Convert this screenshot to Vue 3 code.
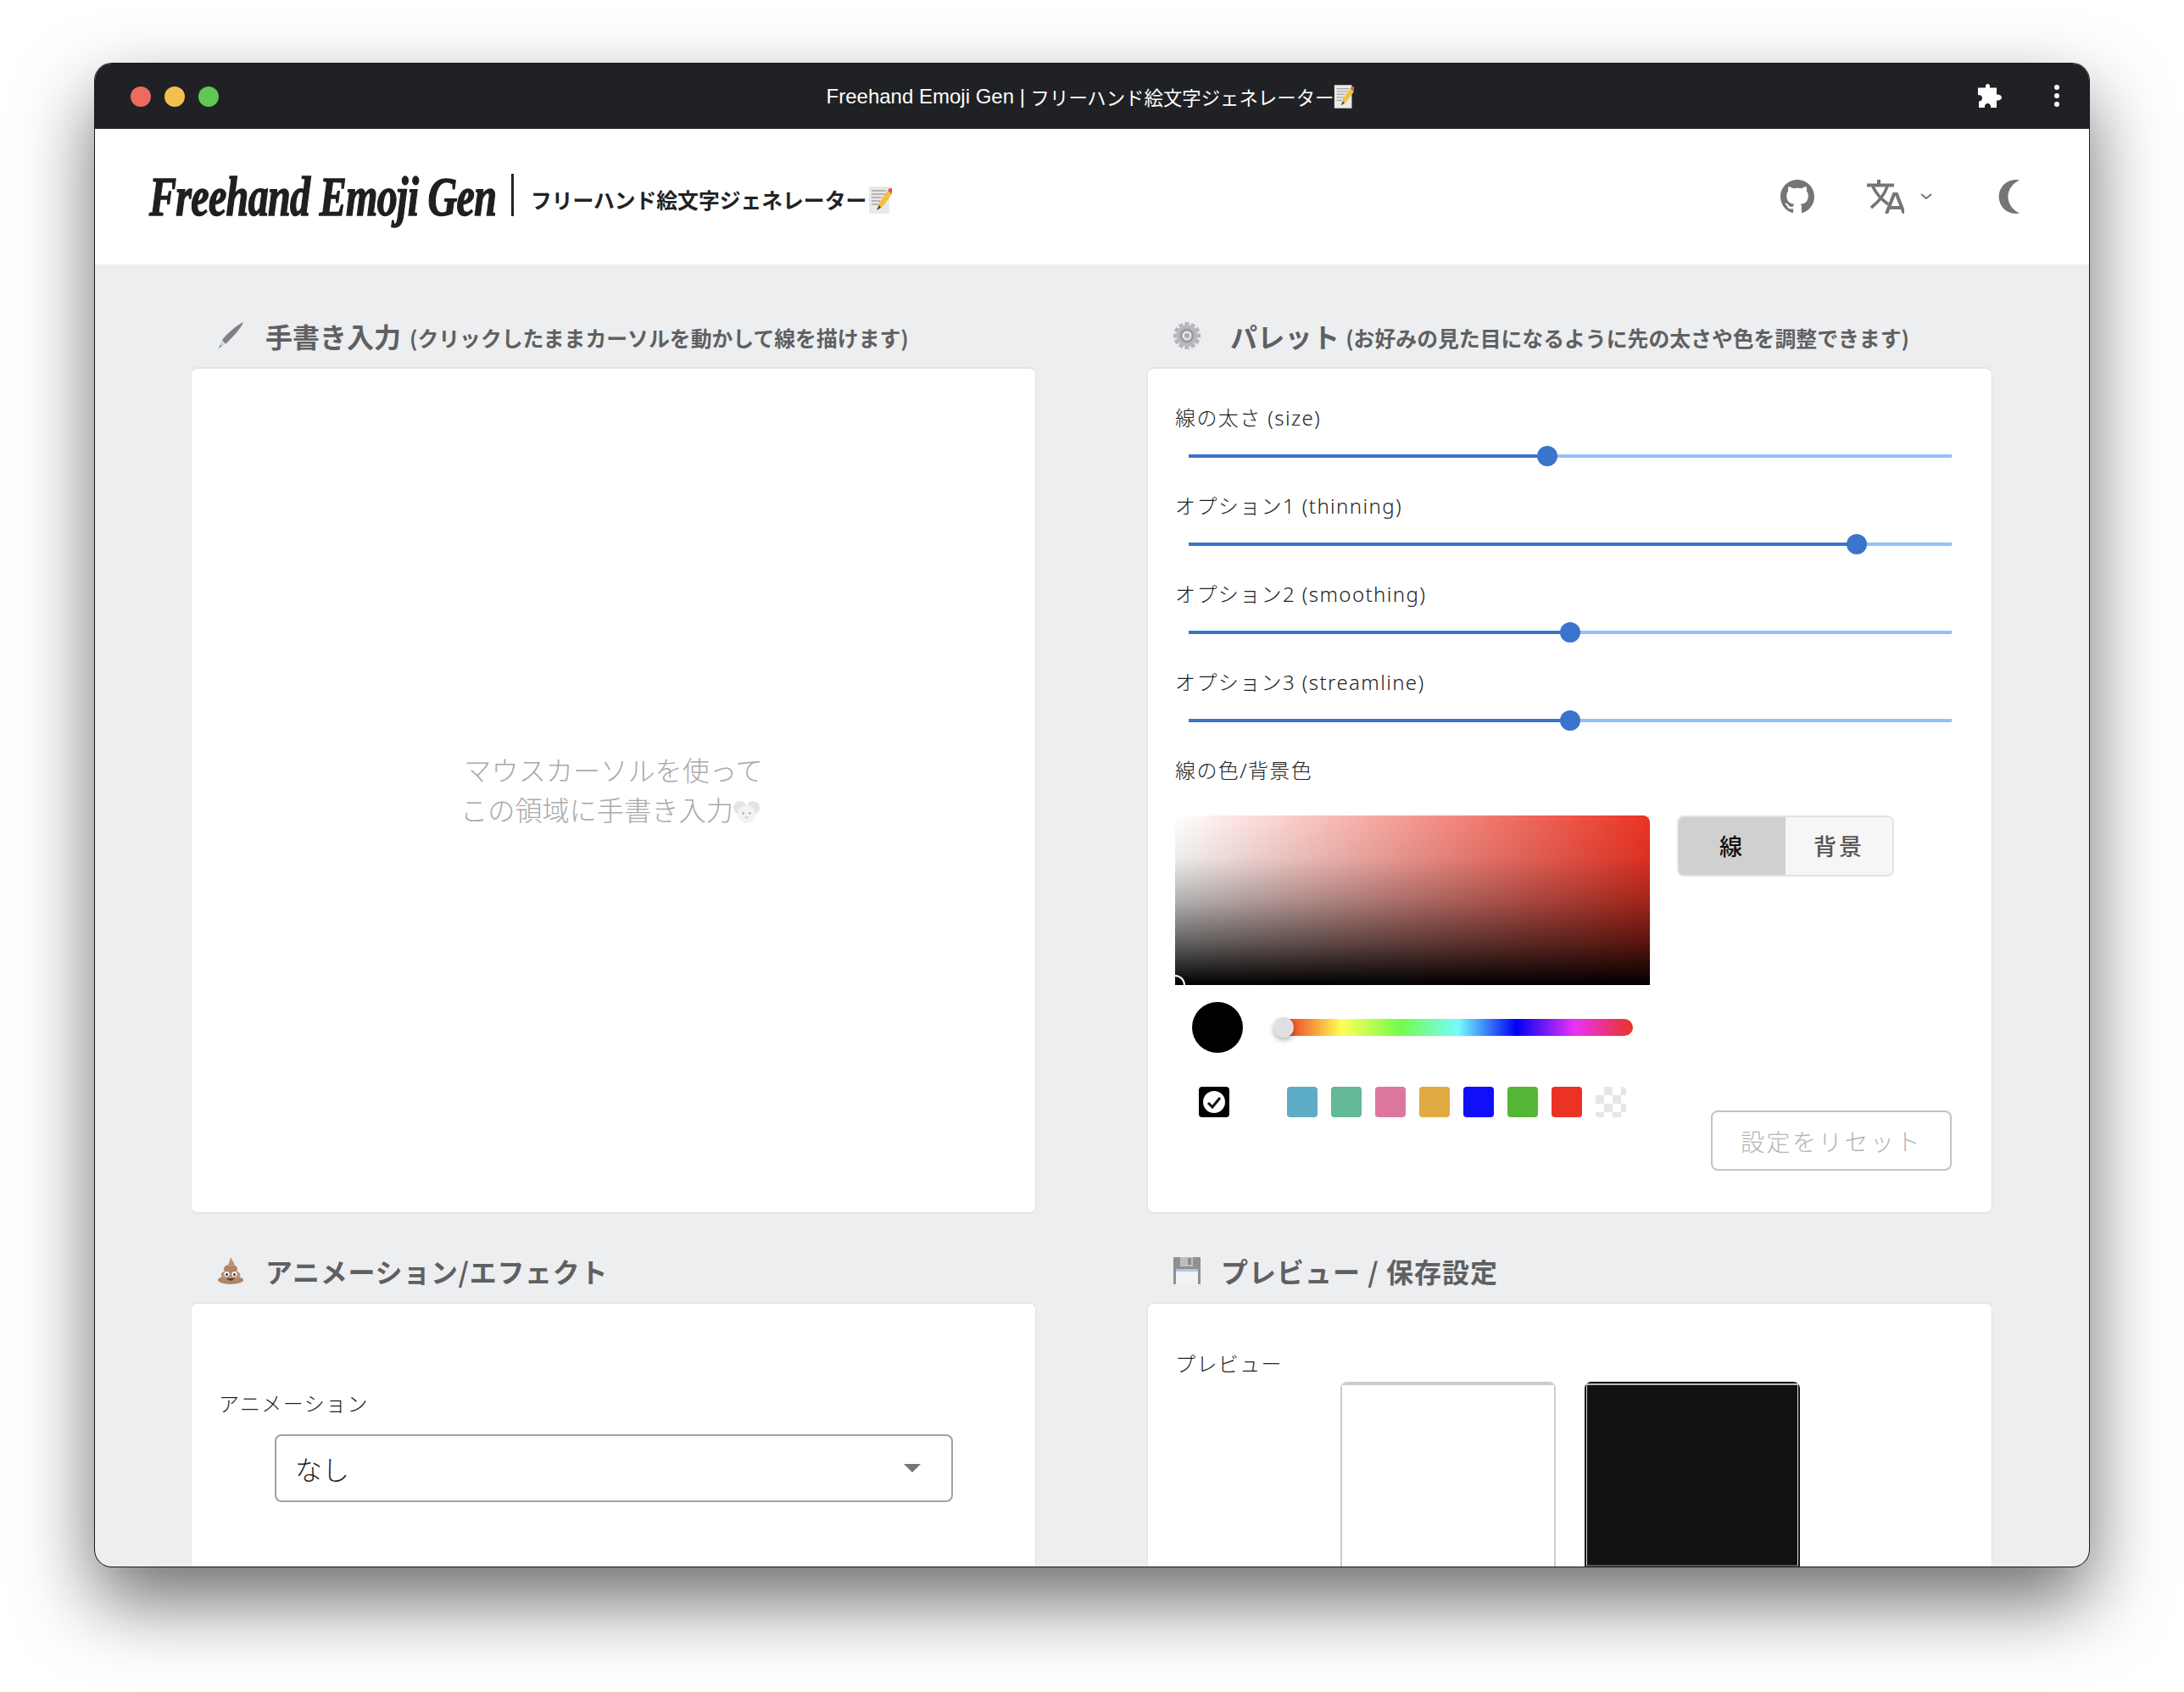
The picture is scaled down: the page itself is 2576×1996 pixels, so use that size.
<template>
  <div class="desktop">
    <div class="window">
      <div class="titlebar">
        <div class="lights">
          <span class="light red"></span>
          <span class="light yellow"></span>
          <span class="light green"></span>
        </div>
        <div class="title">
          <span>Freehand Emoji Gen |&nbsp;</span><span class="title-jp">フリーハンド絵文字ジェネレーター</span>
          <svg class="memo-small" viewBox="0 0 28 32">
            <rect x="1" y="0" width="24" height="32" fill="#e9e9e9" />
            <path d="M4 5h17M4 9h17M4 13h12M4 17h10M4 21h8" stroke="#a5a5a5" stroke-width="1.4" />
            <path d="M10 28 L13 19 L23 5 L28 9 L17 24 Z" fill="#f3c13c" />
            <path d="M23 5 L25 2 L28 2 L28 9 Z" fill="#e2574c" />
            <path d="M10 28 L13 22 L15 25 Z" fill="#444" />
          </svg>
        </div>
        <div class="chrome-icons">
          <svg class="puzzle" viewBox="0 0 28 28">
            <path d="M7.500 4.500H9C8.500 2 9.500 0 11.500 0S14.500 2 14 4.500H22V12.500C25 12 28 13.500 28 16S25 20 22 19.500V28H15C15.500 25.500 14 23 11.500 23S7.500 25.500 8 28H1V20.500C3.500 20.500 5 19 5 16.500S3 13 0 13V4.500Z" fill="#fff" />
          </svg>
          <div class="dots"><i></i><i></i><i></i></div>
        </div>
      </div>

      <header class="app-header">
        <div class="brand">
          <span class="logo">Freehand Emoji Gen</span>
          <span class="divider"></span>
          <span class="subtitle">フリーハンド絵文字ジェネレーター</span>
          <svg class="memo" viewBox="0 0 28 32">
            <rect x="1" y="0" width="24" height="32" fill="#e9e9e9" />
            <path d="M4 5h17M4 9h17M4 13h12M4 17h10M4 21h8" stroke="#a5a5a5" stroke-width="1.4" />
            <path d="M10 28 L13 19 L23 5 L28 9 L17 24 Z" fill="#f3c13c" />
            <path d="M23 5 L25 2 L28 2 L28 9 Z" fill="#e2574c" />
            <path d="M10 28 L13 22 L15 25 Z" fill="#444" />
          </svg>
        </div>
        <div class="header-actions">
          <svg class="gh" viewBox="0 0 16 16">
            <path fill-rule="evenodd" d="M8 0C3.580 0 0 3.580 0 8c0 3.540 2.290 6.530 5.470 7.590.4.070.55-.17.55-.38 0-.19-.01-.82-.01-1.490-2.010.37-2.530-.49-2.690-.94-.09-.23-.48-.94-.82-1.130-.28-.15-.68-.52-.01-.53.63-.01 1.080.58 1.230.82.720 1.210 1.870.87 2.330.66.070-.52.280-.87.510-1.070-1.780-.2-3.640-.89-3.640-3.950 0-.87.310-1.590.820-2.150-.08-.2-.36-1.020.08-2.120 0 0 .67-.21 2.200.82.640-.18 1.320-.27 2-.27s1.360.09 2 .27c1.530-1.040 2.200-.82 2.200-.82.440 1.100.16 1.920.08 2.120.51.560.82 1.270.82 2.150 0 3.070-1.870 3.750-3.650 3.950.29.250.54.730.54 1.480 0 1.070-.01 1.930-.01 2.200 0 .21.150.46.550.38A8.010 8.010 0 0 0 16 8c0-4.420-3.580-8-8-8z" fill="#757575" />
          </svg>
          <svg class="lang" viewBox="0 0 44 40">
            <path d="M0 6.500h32" stroke="#757575" stroke-width="4" fill="none" />
            <path d="M14 0v6" stroke="#757575" stroke-width="4" fill="none" />
            <path d="M7 8c4 9 10 15 18 21M24 8c-3 9-9 17-19 25" stroke="#757575" stroke-width="3.600" fill="none" />
            <path d="M23 40 L32 17 H35 L44 40 M26 33 H41" stroke="#757575" stroke-width="4" fill="none" />
          </svg>
          <svg class="chev" viewBox="0 0 14 8">
            <path d="M1 1l6 5 6-5" stroke="#757575" stroke-width="2" fill="none" />
          </svg>
          <svg class="moon" viewBox="0 0 26 40">
            <path d="M26 0.500A20 20 0 1 0 26 39.500C17 35 12.500 28 12.500 20S17 5 26 0.500Z" fill="#757575" />
          </svg>
        </div>
      </header>

      <main class="board">
        <section class="panel">
          <h2 class="panel-title">
            <svg class="emoji" viewBox="0 0 32 32">
              <path d="M31 0C24 3 12 13 6 21l4 5C17 19 28 8 31 0z" fill="#7f8083" />
              <path d="M6 21l4 5-4 2-2-2z" fill="#d2d5d8" />
              <path d="M4 26l2 2-5 4z" fill="#7fa3b6" />
            </svg>
            <span class="title-main">手書き入力</span>
            <small>(クリックしたままカーソルを動かして線を描けます)</small>
          </h2>
          <div class="card draw-card">
            <p class="placeholder">
              マウスカーソルを使って<br />
              この領域に手書き入力<svg class="mouse" viewBox="0 0 32 30">
                <circle cx="8" cy="9" r="8" fill="#e4e4e4" />
                <circle cx="24" cy="9" r="8" fill="#e4e4e4" />
                <ellipse cx="16" cy="17" rx="11" ry="11" fill="#f3f3f3" />
                <circle cx="12" cy="16" r="1.200" fill="#999" />
                <circle cx="20" cy="16" r="1.200" fill="#999" />
                <ellipse cx="16" cy="21" rx="2" ry="1.500" fill="#f2c5bb" />
              </svg>
            </p>
          </div>
        </section>

        <section class="panel">
          <h2 class="panel-title">
            <svg class="emoji" viewBox="0 0 32 32">
              <g fill="#b4b6b9">
                <rect v-for="a in gearTeeth" :key="a" x="13.500" y="0" width="5" height="7" :transform="`rotate(${a} 16 16)`" />
              </g>
              <circle cx="16" cy="16" r="12.500" fill="#b7b9bc" />
              <circle cx="16" cy="16" r="8.500" fill="#9a9c9f" />
              <circle cx="16" cy="16" r="5.500" fill="#e8e8e8" />
              <circle cx="16" cy="16" r="3" fill="#a9abad" />
            </svg>
            <span class="title-main title-wide">パレット</span>
            <small>(お好みの見た目になるように先の太さや色を調整できます)</small>
          </h2>
          <div class="card palette-card">
            <div v-for="s in sliders" :key="s.label" class="slider-group">
              <div class="field-label">{{ s.label }}</div>
              <div class="slider">
                <div class="slider-track">
                  <div class="slider-fill" :style="{ width: s.value + '%' }"></div>
                  <div class="slider-handle" :style="{ left: s.value + '%' }"></div>
                </div>
              </div>
            </div>
            <div class="field-label">線の色/背景色</div>
            <div class="color-area">
              <div class="picker">
                <div class="saturation">
                  <span class="sat-pointer"></span>
                </div>
                <div class="hue-row">
                  <div class="current-color"></div>
                  <div class="hue-track"><span class="hue-thumb"></span></div>
                </div>
                <div class="swatches">
                  <div class="swatch swatch-black">
                    <svg viewBox="0 0 26 26" class="tick">
                      <circle cx="13" cy="13" r="13" fill="#fff" />
                      <path d="M6 14l5 5 9-11" stroke="#111" stroke-width="3" fill="none" />
                    </svg>
                  </div>
                  <div class="swatch-list">
                    <div v-for="c in swatchColors" :key="c" class="swatch" :style="{ background: c }"></div>
                    <div class="swatch swatch-clear"></div>
                  </div>
                </div>
              </div>
              <div class="color-side">
                <div class="toggle">
                  <div class="toggle-item active">線</div>
                  <div class="toggle-item">背景</div>
                </div>
                <div class="reset">設定をリセット</div>
              </div>
            </div>
          </div>
        </section>

        <section class="panel">
          <h2 class="panel-title">
            <svg class="emoji" viewBox="0 0 32 32">
              <ellipse cx="16" cy="27" rx="15" ry="5" fill="#b08468" />
              <ellipse cx="16" cy="21" rx="11.500" ry="6" fill="#bd9277" />
              <ellipse cx="16" cy="14" rx="8" ry="5.500" fill="#b08468" />
              <path d="M12 11C14 8 15 4 16 0c2 4 5 7 5 11z" fill="#bd9277" />
              <circle cx="11.500" cy="20" r="3" fill="#fff" />
              <circle cx="20.500" cy="20" r="3" fill="#fff" />
              <circle cx="11.500" cy="20.500" r="1.500" fill="#333" />
              <circle cx="20.500" cy="20.500" r="1.500" fill="#333" />
              <path d="M11 25c3 3.500 7 3.500 10 0z" fill="#5b3a2a" />
            </svg>
            <span class="title-main title-anim">アニメーション/エフェクト</span>
          </h2>
          <div class="card anim-card">
            <div class="field-label">アニメーション</div>
            <div class="select">
              <span>なし</span>
              <i class="select-arrow"></i>
            </div>
          </div>
        </section>

        <section class="panel">
          <h2 class="panel-title">
            <svg class="emoji" viewBox="0 0 32 32">
              <rect x="0" y="0" width="32" height="32" rx="1" fill="#8f9092" />
              <rect x="8" y="0" width="15" height="11" fill="#bdbec0" />
              <rect x="17" y="1" width="4" height="8" fill="#8f9092" />
              <rect x="3" y="14" width="26" height="3" fill="#a7cbe8" />
              <rect x="3" y="17" width="26" height="15" fill="#f1f2f3" />
            </svg>
            <span class="title-main title-tight">プレビュー / 保存設定</span>
          </h2>
          <div class="card preview-card">
            <div class="field-label">プレビュー</div>
            <div class="previews">
              <div class="preview preview-light"><div class="preview-inner"></div></div>
              <div class="preview preview-dark"><div class="preview-inner"></div></div>
            </div>
          </div>
        </section>
      </main>
    </div>
  </div>
</template>

<script setup>
const sliders = [
  { label: '線の太さ (size)', value: 47 },
  { label: 'オプション1 (thinning)', value: 87.6 },
  { label: 'オプション2 (smoothing)', value: 50 },
  { label: 'オプション3 (streamline)', value: 50 },
];

const swatchColors = ['#5eadc6', '#62b897', '#dd769f', '#e0aa42', '#1010f8', '#55b636', '#ea3323'];

const gearTeeth = [0, 30, 60, 90, 120, 150, 180, 210, 240, 270, 300, 330];
</script>

<style>
html,
body {
  margin: 0;
  background: #fff;
  overflow: hidden;
}
</style>

<style scoped>
.desktop {
  width: 2576px;
  height: 1996px;
  box-sizing: border-box;
  padding: 75px 112px 148px;
  background: #fff;
  font-family: "Noto Sans CJK JP", "Noto Sans", sans-serif;
  color: #222;
}

.window {
  height: 1773px;
  border-radius: 20px;
  overflow: hidden;
  background: #edeef0;
  box-shadow: 0 0 0 1px #1a1a1a, 0 40px 90px rgba(0, 0, 0, 0.58);
}

.titlebar {
  height: 77px;
  box-sizing: border-box;
  position: relative;
  display: flex;
  align-items: center;
  justify-content: center;
  background: #202124;
  color: #fff;
  font-family: "Liberation Sans", "Noto Sans CJK JP", sans-serif;
  font-size: 24px;
}

.lights {
  position: absolute;
  left: 42px;
  top: 27px;
  display: flex;
  gap: 16px;
}

.light {
  width: 24px;
  height: 24px;
  border-radius: 50%;
}

.red { background: #ed6a5e; }
.yellow { background: #f5bf4f; }
.green { background: #62c554; }

.title {
  display: flex;
  align-items: center;
  margin-right: 4px;
}

.title-jp {
  font-family: "Noto Sans CJK JP", sans-serif;
  font-size: 22.400px;
}

.memo-small {
  width: 24px;
  height: 28px;
}

.chrome-icons {
  position: absolute;
  right: 35px;
  top: 0;
  height: 76px;
  display: flex;
  align-items: center;
  gap: 62px;
}

.puzzle {
  width: 28px;
  height: 28px;
}

.dots {
  display: flex;
  flex-direction: column;
  gap: 4px;
}

.dots i {
  width: 6px;
  height: 6px;
  border-radius: 50%;
  background: #fff;
}

.app-header {
  height: 160px;
  background: #fff;
  display: flex;
  align-items: center;
  justify-content: space-between;
  padding: 0 82px 0 64px;
}

.brand {
  display: flex;
  align-items: center;
}

.logo {
  width: 408px;
  white-space: nowrap;
  transform: scaleX(0.729);
  transform-origin: left center;
  font-family: "Liberation Serif", serif;
  font-style: italic;
  font-weight: 700;
  font-size: 66px;
  letter-spacing: -1px;
  color: #1f1f1f;
  -webkit-text-stroke: 1.500px #1f1f1f;
  line-height: 1;
}

.divider {
  width: 3px;
  height: 50px;
  margin: 0 20px 5px 19px;
  background: #222;
}

.subtitle {
  font-size: 24.800px;
  font-weight: 700;
  margin-top: 6px;
  color: #222;
}

.memo {
  width: 32px;
  height: 32px;
  margin-top: 8px;
}

.header-actions {
  display: flex;
  align-items: center;
}

.gh {
  width: 40px;
  height: 40px;
  margin-right: 62px;
}

.lang {
  width: 44px;
  height: 40px;
  margin-right: 19px;
}

.chev {
  width: 14px;
  height: 8px;
  margin-right: 77px;
}

.moon {
  width: 26px;
  height: 40px;
}

.board {
  display: grid;
  grid-template-columns: 997px 997px;
  column-gap: 131px;
  row-gap: 48px;
  padding: 65px 0 0 113px;
}

.panel-title {
  height: 40px;
  box-sizing: border-box;
  margin: 0 0 16px;
  padding: 0 0 2px 31px;
  display: flex;
  align-items: center;
  color: #5f6062;
  font-size: 32px;
  font-weight: 700;
  white-space: nowrap;
}

.panel-title small {
  font-size: 24.850px;
  font-weight: 700;
  margin-left: 10px;
  padding-top: 4px;
}

.emoji {
  width: 32px;
  height: 32px;
  flex: none;
  margin-right: 25px;
}

.title-wide {
  letter-spacing: 0.300px;
  margin-left: 10px;
}

.title-wide + small {
  margin-left: 7px;
}

.title-anim {
  letter-spacing: 0.700px;
}

.title-tight {
  letter-spacing: 1px;
  margin-left: -1px;
}

.card {
  background: #fff;
  border: 1px solid #e3e4e6;
  border-width: 2px 1px;
  border-radius: 8px;
  box-sizing: border-box;
}

.draw-card {
  height: 999px;
  display: flex;
  align-items: center;
  justify-content: center;
}

.placeholder {
  margin: 0 0 3px;
  font-size: 32.200px;
  line-height: 47px;
  text-align: center;
  color: #aaa;
  font-weight: 300;
}

.mouse {
  width: 31px;
  height: 29px;
  margin-right: 8px;
  vertical-align: -5px;
}

.palette-card {
  height: 999px;
  padding: 38px 32px 0;
}

.field-label {
  height: 40px;
  line-height: 40px;
  font-family: "Noto Sans", "Noto Sans CJK JP", sans-serif;
  font-size: 24px;
  letter-spacing: 1.400px;
  color: #222;
  font-weight: 300;
}

.slider-group {
  margin-bottom: 16px;
}

.slider {
  height: 48px;
  box-sizing: border-box;
  padding-top: 2px;
  display: flex;
  align-items: center;
  margin: 0 15px 0 16px;
}

.slider-track {
  position: relative;
  width: 100%;
  height: 4px;
  background: #93c0fb;
}

.slider-fill {
  height: 100%;
  background: #3a74cc;
}

.slider-handle {
  position: absolute;
  top: -10px;
  width: 24px;
  height: 24px;
  margin-left: -12px;
  border-radius: 50%;
  background: #3a74cc;
}

.color-area {
  display: flex;
  margin-top: 33px;
  gap: 33px;
}

.picker {
  width: 560px;
  flex: none;
}

.saturation {
  position: relative;
  height: 200px;
  border-radius: 8px 8px 0 0;
  overflow: hidden;
  background:
    linear-gradient(
      to top,
      #000 0%,
      rgba(0, 0, 0, 0.62) 25%,
      rgba(0, 0, 0, 0.3) 50%,
      rgba(0, 0, 0, 0.07) 75%,
      rgba(0, 0, 0, 0) 100%
    ),
    linear-gradient(to right, #fff, #ea3323);
}

.sat-pointer {
  position: absolute;
  left: -12px;
  bottom: -12px;
  width: 20px;
  height: 20px;
  border: 2px solid #fff;
  border-radius: 50%;
}

.hue-row {
  display: flex;
  align-items: center;
  height: 60px;
  margin-top: 20px;
  padding-left: 20px;
}

.current-color {
  width: 60px;
  height: 60px;
  border-radius: 50%;
  background: #000;
}

.hue-track {
  position: relative;
  width: 412px;
  height: 20px;
  margin-left: 48px;
  border-radius: 0 10px 10px 0;
  background: linear-gradient(
    to right,
    #ea3323 0%,
    #ffff55 16.600%,
    #75fb4c 33.300%,
    #75fbfd 50%,
    #0000f5 66.600%,
    #ea33f7 83.300%,
    #ea3323 100%
  );
}

.hue-thumb {
  position: absolute;
  left: -12px;
  top: -2px;
  width: 24px;
  height: 24px;
  border-radius: 50%;
  background: #e0e0e0;
  box-shadow: 0 3px 6px rgba(0, 0, 0, 0.3);
}

.swatches {
  display: flex;
  margin-top: 40px;
  padding-left: 28px;
}

.swatch {
  width: 36px;
  height: 36px;
  border-radius: 4px;
}

.swatch-black {
  display: flex;
  align-items: center;
  justify-content: center;
  background: #000;
}

.tick {
  width: 26px;
  height: 26px;
}

.swatch-list {
  display: flex;
  gap: 16px;
  margin-left: 68px;
}

.swatch-clear {
  background-color: #fff;
  background-image: repeating-conic-gradient(#e6e6e6 0 25%, #fff 0 50%);
  background-size: 20px 20px;
}

.color-side {
  flex: 1;
  height: 419px;
  margin-left: -1px;
  display: flex;
  flex-direction: column;
  justify-content: space-between;
  align-items: flex-start;
}

.toggle {
  display: flex;
  width: 256px;
  height: 72px;
  box-sizing: border-box;
  border: 2px solid #e3e3e3;
  border-radius: 8px;
  overflow: hidden;
  font-size: 27px;
  font-weight: 500;
  background: #f6f6f6;
}

.toggle-item {
  flex: 1;
  display: flex;
  align-items: center;
  justify-content: center;
  padding-bottom: 2px;
  color: #555;
  letter-spacing: 3px;
}

.toggle-item.active {
  background: #d0d0d0;
  color: #111;
}

.reset {
  align-self: flex-end;
  width: 284px;
  height: 71px;
  margin-right: 15px;
  box-sizing: border-box;
  border: 2px solid #c4c4c4;
  border-radius: 8px;
  display: flex;
  align-items: center;
  justify-content: center;
  font-size: 28px;
  letter-spacing: 2.600px;
  color: #b4b4b4;
  font-weight: 300;
}

.anim-card {
  height: 400px;
  padding: 98px 32px 0;
}

.select {
  width: 800px;
  height: 80px;
  box-sizing: border-box;
  margin: 16px 0 0 66px;
  padding: 0 36px 0 22px;
  border: 2px solid #a2a2a2;
  border-radius: 8px;
  display: flex;
  align-items: center;
  justify-content: space-between;
  font-size: 32px;
  color: #222;
  font-weight: 300;
}

.select-arrow {
  width: 0;
  height: 0;
  border-left: 10px solid transparent;
  border-right: 10px solid transparent;
  border-top: 10px solid #757575;
}

.preview-card {
  height: 400px;
  padding: 51px 32px 0;
}

.previews {
  display: flex;
  gap: 34px;
  margin: 1px 0 0 195px;
}

.preview {
  width: 254px;
  height: 224px;
  box-sizing: border-box;
  border-radius: 8px;
  border: 2px solid #ccc;
}

.preview-dark {
  border-color: #111;
}

.preview-inner {
  height: 216px;
  box-sizing: border-box;
}

.preview-light .preview-inner {
  background: #fff;
  border-top: 2px solid #cdcdcd;
}

.preview-dark .preview-inner {
  background: #121212;
  border-top: 2px solid #bbb;
  border-left: 1px solid #ddd;
  border-right: 1px solid #ddd;
  border-bottom: 2px solid #555;
}
</style>
